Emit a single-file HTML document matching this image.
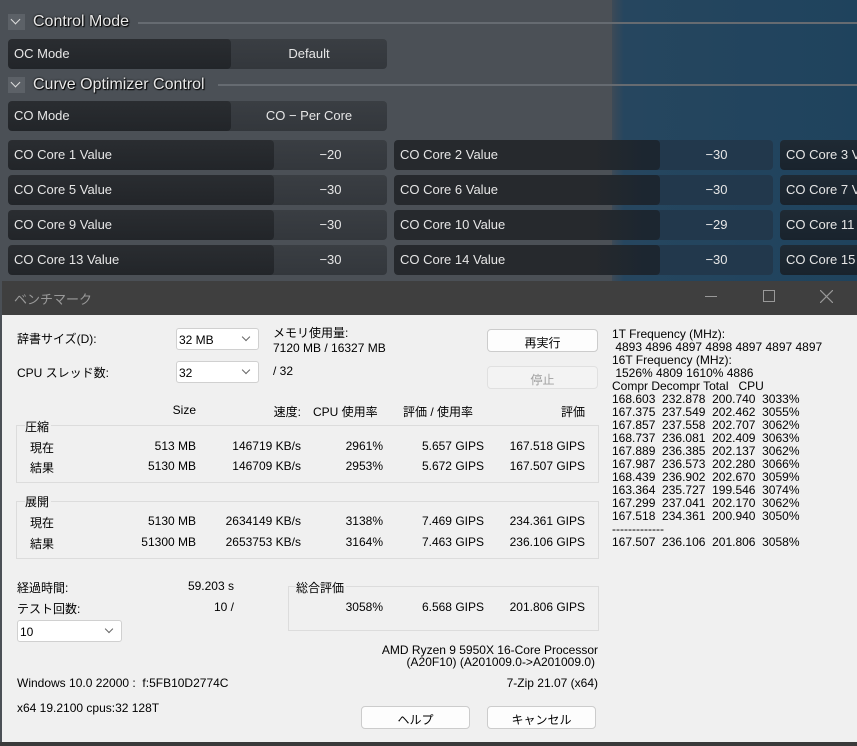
<!DOCTYPE html>
<html><head><meta charset="utf-8"><style>
*{margin:0;padding:0;box-sizing:border-box}
body{width:857px;height:746px;overflow:hidden;position:relative;background:#4b5056;font-family:"Liberation Sans","Noto Sans CJK JP",sans-serif}
.a{position:absolute;white-space:nowrap}
.bgr{position:absolute;left:612px;top:0;width:245px;height:281px;background:linear-gradient(90deg,#3d4a57 0,#26465f 12px,#1f435d 100%)}
.hdr{color:#e8e8e8;font-size:16px;text-shadow:0 0 2px #000,1px 1px 1px #000}
.chev{position:absolute;width:17px;height:16px;background:#5c6167}
.chev:after{content:"";position:absolute;left:4px;top:2px;width:6px;height:6px;border-right:1.5px solid #ddd;border-bottom:1.5px solid #ddd;transform:rotate(45deg)}
.line{position:absolute;height:2px;background:#666b71}
.row{position:absolute;height:30px;border-radius:4px;background:linear-gradient(#3a3e43,#33373c);overflow:hidden}
.row .l{position:absolute;left:0;top:0;bottom:0;background:linear-gradient(#2a2d31,#222529);border-radius:4px}
.row span{position:absolute;top:7px;color:#e6e6e6;font-size:13px;white-space:nowrap}
.row .v{text-align:center}
.blue{background:linear-gradient(#24384b,#1e3347)}
.blue .l{background:linear-gradient(#1f2a34,#19232d)}
.win{position:absolute;left:2px;top:281px;width:855px;height:465px;background:#f0f0f0}
.tb{position:absolute;left:0;top:0;width:855px;height:34px;background:#3f3f3f}
.t{position:absolute;font-size:12px;color:#000;white-space:nowrap}
.r{text-align:right}
.dd{position:absolute;height:22px;background:#fff;border:1px solid #d0d0d0;border-radius:3px;font-size:12px;padding:4px 0 0 2px}
.dd:after{content:"";position:absolute;right:9px;top:5px;width:5px;height:5px;border-right:1px solid #666;border-bottom:1px solid #666;transform:rotate(45deg)}
.btn{position:absolute;height:23px;background:#fdfdfd;border:1px solid #ccc;border-radius:4px;font-size:12px;text-align:center;padding-top:4px}
.grp{position:absolute;border:1px solid #dcdcdc}
.gl{position:absolute;background:#f0f0f0;font-size:12px;padding-right:2px}
.mono{position:absolute;left:612px;top:328px;font-size:12px;line-height:13px;white-space:pre;color:#000}
</style></head><body>
<div class="bgr"></div>
<div class="chev" style="left:8px;top:14px"></div>
<div class="a hdr" style="left:33px;top:13px">Control Mode</div>
<div class="line" style="left:138px;top:22px;width:719px"></div>
<div class="row" style="left:8px;top:39px;width:379px"><div class="l" style="width:223px"></div><span style="left:6px">OC Mode</span><span class="v" style="left:223px;width:156px">Default</span></div>
<div class="chev" style="left:8px;top:77px"></div>
<div class="a hdr" style="left:33px;top:76px">Curve Optimizer Control</div>
<div class="line" style="left:218px;top:84px;width:639px"></div>
<div class="row" style="left:8px;top:101px;width:379px"><div class="l" style="width:223px"></div><span style="left:6px">CO Mode</span><span class="v" style="left:223px;width:156px">CO − Per Core</span></div>

<div class="row" style="left:8px;top:140px;width:379px"><div class="l" style="width:266px"></div><span style="left:6px">CO Core 1 Value</span><span class="v" style="left:266px;width:113px">−20</span></div>
<div class="row" style="left:8px;top:175px;width:379px"><div class="l" style="width:266px"></div><span style="left:6px">CO Core 5 Value</span><span class="v" style="left:266px;width:113px">−30</span></div>
<div class="row" style="left:8px;top:210px;width:379px"><div class="l" style="width:266px"></div><span style="left:6px">CO Core 9 Value</span><span class="v" style="left:266px;width:113px">−30</span></div>
<div class="row" style="left:8px;top:245px;width:379px"><div class="l" style="width:266px"></div><span style="left:6px">CO Core 13 Value</span><span class="v" style="left:266px;width:113px">−30</span></div>

<div class="row" style="left:394px;top:140px;width:379px;background:linear-gradient(90deg,#383c41 0,#383c41 220px,#22384c 250px)"><div class="l" style="width:266px;background:linear-gradient(90deg,#26292d 0,#26292d 200px,#1c2630 250px)"></div><span style="left:6px">CO Core 2 Value</span><span class="v" style="left:266px;width:113px">−30</span></div>
<div class="row" style="left:394px;top:175px;width:379px;background:linear-gradient(90deg,#383c41 0,#383c41 220px,#22384c 250px)"><div class="l" style="width:266px;background:linear-gradient(90deg,#26292d 0,#26292d 200px,#1c2630 250px)"></div><span style="left:6px">CO Core 6 Value</span><span class="v" style="left:266px;width:113px">−30</span></div>
<div class="row" style="left:394px;top:210px;width:379px;background:linear-gradient(90deg,#383c41 0,#383c41 220px,#22384c 250px)"><div class="l" style="width:266px;background:linear-gradient(90deg,#26292d 0,#26292d 200px,#1c2630 250px)"></div><span style="left:6px">CO Core 10 Value</span><span class="v" style="left:266px;width:113px">−29</span></div>
<div class="row" style="left:394px;top:245px;width:379px;background:linear-gradient(90deg,#383c41 0,#383c41 220px,#22384c 250px)"><div class="l" style="width:266px;background:linear-gradient(90deg,#26292d 0,#26292d 200px,#1c2630 250px)"></div><span style="left:6px">CO Core 14 Value</span><span class="v" style="left:266px;width:113px">−30</span></div>

<div class="row blue" style="left:780px;top:140px;width:100px"><div class="l" style="width:100px"></div><span style="left:6px">CO Core 3 Value</span></div>
<div class="row blue" style="left:780px;top:175px;width:100px"><div class="l" style="width:100px"></div><span style="left:6px">CO Core 7 Value</span></div>
<div class="row blue" style="left:780px;top:210px;width:100px"><div class="l" style="width:100px"></div><span style="left:6px">CO Core 11 Value</span></div>
<div class="row blue" style="left:780px;top:245px;width:100px"><div class="l" style="width:100px"></div><span style="left:6px">CO Core 15 Value</span></div>

<div class="win">
<div class="tb">
<div class="t" style="left:12px;top:8px;color:#9a9a9a;font-size:13px">ベンチマーク</div>
<div class="a" style="left:703px;top:15px;width:12px;height:1px;background:#999"></div>
<div class="a" style="left:761px;top:9px;width:12px;height:12px;border:1px solid #999"></div>
<svg class="a" style="left:818px;top:9px" width="13" height="13"><path d="M0 0L13 13M13 0L0 13" stroke="#999" stroke-width="1.2"/></svg>
</div>
</div>

<div class="t" style="left:17px;top:330px">辞書サイズ(D):</div>
<div class="dd" style="left:176px;top:328px;width:83px">32 MB</div>
<div class="t" style="left:273px;top:324px">メモリ使用量:</div>
<div class="t" style="left:273px;top:341px">7120 MB / 16327 MB</div>
<div class="btn" style="left:487px;top:329px;width:111px">再実行</div>
<div class="t" style="left:17px;top:364px">CPU スレッド数:</div>
<div class="dd" style="left:176px;top:361px;width:83px">32</div>
<div class="t" style="left:273px;top:364px">/ 32</div>
<div class="btn" style="left:487px;top:366px;width:111px;background:#f3f3f3;border-color:#e0e0e0;color:#a0a0a0">停止</div>

<div class="t r" style="left:120px;top:403px;width:76px">Size</div>
<div class="t r" style="left:220px;top:403px;width:81px">速度:</div>
<div class="t" style="left:313px;top:403px">CPU 使用率</div>
<div class="t" style="left:403px;top:403px">評価 / 使用率</div>
<div class="t r" style="left:520px;top:403px;width:65px">評価</div>

<div class="grp" style="left:16px;top:425px;width:583px;height:58px"></div>
<div class="gl" style="left:25px;top:418px">圧縮</div>
<div class="grp" style="left:16px;top:501px;width:583px;height:58px"></div>
<div class="gl" style="left:25px;top:493px">展開</div>

<div class="t" style="left:30px;top:439px">現在</div>
<div class="t r" style="left:100px;top:439px;width:96px">513 MB</div>
<div class="t r" style="left:200px;top:439px;width:101px">146719 KB/s</div>
<div class="t r" style="left:300px;top:439px;width:83px">2961%</div>
<div class="t r" style="left:400px;top:439px;width:84px">5.657 GIPS</div>
<div class="t r" style="left:490px;top:439px;width:95px">167.518 GIPS</div>
<div class="t" style="left:30px;top:459px">結果</div>
<div class="t r" style="left:100px;top:459px;width:96px">5130 MB</div>
<div class="t r" style="left:200px;top:459px;width:101px">146709 KB/s</div>
<div class="t r" style="left:300px;top:459px;width:83px">2953%</div>
<div class="t r" style="left:400px;top:459px;width:84px">5.672 GIPS</div>
<div class="t r" style="left:490px;top:459px;width:95px">167.507 GIPS</div>

<div class="t" style="left:30px;top:514px">現在</div>
<div class="t r" style="left:100px;top:514px;width:96px">5130 MB</div>
<div class="t r" style="left:200px;top:514px;width:101px">2634149 KB/s</div>
<div class="t r" style="left:300px;top:514px;width:83px">3138%</div>
<div class="t r" style="left:400px;top:514px;width:84px">7.469 GIPS</div>
<div class="t r" style="left:490px;top:514px;width:95px">234.361 GIPS</div>
<div class="t" style="left:30px;top:535px">結果</div>
<div class="t r" style="left:100px;top:535px;width:96px">51300 MB</div>
<div class="t r" style="left:200px;top:535px;width:101px">2653753 KB/s</div>
<div class="t r" style="left:300px;top:535px;width:83px">3164%</div>
<div class="t r" style="left:400px;top:535px;width:84px">7.463 GIPS</div>
<div class="t r" style="left:490px;top:535px;width:95px">236.106 GIPS</div>

<div class="t" style="left:17px;top:579px">経過時間:</div>
<div class="t r" style="left:150px;top:579px;width:84px">59.203 s</div>
<div class="t" style="left:17px;top:600px">テスト回数:</div>
<div class="t r" style="left:150px;top:600px;width:84px">10 /</div>
<div class="dd" style="left:17px;top:620px;width:105px">10</div>

<div class="grp" style="left:288px;top:586px;width:311px;height:45px"></div>
<div class="gl" style="left:296px;top:579px">総合評価</div>
<div class="t r" style="left:300px;top:600px;width:83px">3058%</div>
<div class="t r" style="left:400px;top:600px;width:84px">6.568 GIPS</div>
<div class="t r" style="left:490px;top:600px;width:95px">201.806 GIPS</div>

<div class="t r" style="left:300px;top:643px;width:298px">AMD Ryzen 9 5950X 16-Core Processor</div>
<div class="t r" style="left:300px;top:655px;width:295px">(A20F10) (A201009.0-&gt;A201009.0)</div>
<div class="t" style="left:17px;top:676px">Windows 10.0 22000 : &nbsp;f:5FB10D2774C</div>
<div class="t r" style="left:400px;top:676px;width:198px">7-Zip 21.07 (x64)</div>
<div class="t" style="left:17px;top:701px">x64 19.2100 cpus:32 128T</div>
<div class="btn" style="left:361px;top:706px;width:109px">ヘルプ</div>
<div class="btn" style="left:487px;top:706px;width:109px">キャンセル</div>

<div class="mono">1T Frequency (MHz):
 4893 4896 4897 4898 4897 4897 4897
16T Frequency (MHz):
 1526% 4809 1610% 4886
Compr Decompr Total   CPU
168.603  232.878  200.740  3033%
167.375  237.549  202.462  3055%
167.857  237.558  202.707  3062%
168.737  236.081  202.409  3063%
167.889  236.385  202.137  3062%
167.987  236.573  202.280  3066%
168.439  236.902  202.670  3059%
163.364  235.727  199.546  3074%
167.299  237.041  202.170  3062%
167.518  234.361  200.940  3050%
-------------
167.507  236.106  201.806  3058%</div>
<div class="a" style="left:0;top:742px;width:857px;height:4px;background:#3a3a3a"></div>
</body></html>
